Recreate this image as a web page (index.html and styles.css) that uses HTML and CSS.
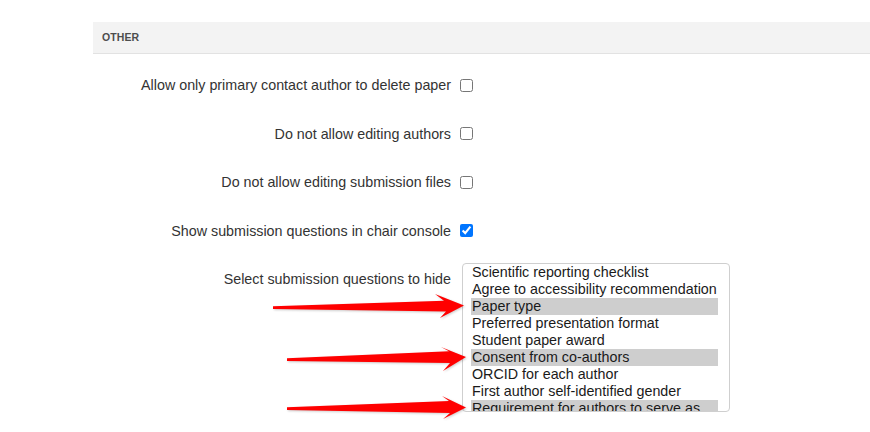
FILE: index.html
```html
<!DOCTYPE html>
<html>
<head>
<meta charset="utf-8">
<link rel="stylesheet" href="styles.css">
</head>
<body>
<div class="page">
  <div class="section-head">OTHER</div>
  <div class="form">
    <div class="row">
      <label class="lbl">Allow only primary contact author to delete paper</label>
      <div class="ctl"><input type="checkbox" class="cb"></div>
    </div>
    <div class="row">
      <label class="lbl">Do not allow editing authors</label>
      <div class="ctl"><input type="checkbox" class="cb"></div>
    </div>
    <div class="row">
      <label class="lbl">Do not allow editing submission files</label>
      <div class="ctl"><input type="checkbox" class="cb"></div>
    </div>
    <div class="row">
      <label class="lbl">Show submission questions in chair console</label>
      <div class="ctl"><input type="checkbox" class="cb" checked></div>
    </div>
    <div class="row row-top">
      <label class="lbl lbl-top">Select submission questions to hide</label>
      <div class="ctl">
        <div class="listbox">
          <div class="opt">Scientific reporting checklist</div>
          <div class="opt">Agree to accessibility recommendation</div>
          <div class="opt sel">Paper type</div>
          <div class="opt">Preferred presentation format</div>
          <div class="opt">Student paper award</div>
          <div class="opt sel">Consent from co-authors</div>
          <div class="opt">ORCID for each author</div>
          <div class="opt">First author self-identified gender</div>
          <div class="opt sel">Requirement for authors to serve as</div>
        </div>
      </div>
    </div>
  </div>
  <svg class="arrows" width="870" height="432" viewBox="0 0 870 432">
    <polygon points="273,306.3 444,300.8 435,294 464,305.6 440,318 446,311.5 273,308.9"/>
    <polygon points="287,358.3 449,351.3 441,347 466,357 443,371 450,363 287,360.9"/>
    <polygon points="287,407.3 449,401 442,396 466,407.6 443,419 450,413 287,409.9"/>
  </svg>
</div>
</body>
</html>
```

FILE: styles.css
```css
html, body {
  margin: 0;
  padding: 0;
  background: #ffffff;
}
body {
  font-family: "Liberation Sans", Arial, sans-serif;
  color: #333333;
  width: 870px;
  height: 432px;
  overflow: hidden;
}
.page {
  position: relative;
  padding-top: 22px;
  padding-left: 93px;
  height: 410px;
}
.section-head {
  height: 31px;
  line-height: 31px;
  background: #f3f3f3;
  border-bottom: 1px solid #e2e2e2;
  padding-left: 9px;
  font-size: 10.5px;
  font-weight: bold;
  letter-spacing: 0.1px;
  color: #4d4d4d;
}
.form {
  padding-top: 6.75px;
}
.row {
  display: grid;
  grid-template-columns: 358px auto;
  column-gap: 9px;
  align-items: center;
  height: 48.5px;
}
.row-top {
  align-items: start;
  padding-top: 8.25px;
  height: auto;
}
.lbl {
  text-align: right;
  font-size: 14.3px;
  line-height: 18px;
  color: #333333;
  white-space: nowrap;
}
.lbl-top {
  padding-top: 6.5px;
}
.ctl {
  display: flex;
  align-items: center;
}
.cb {
  width: 13px;
  height: 13px;
  margin: 0;
}
.listbox {
  margin-left: 2px;
  width: 247px;
  height: 147px;
  overflow: hidden;
  border: 1px solid #cfcfcf;
  border-radius: 4px;
  padding: 0 11px 0 8px;
}
.opt {
  height: 17px;
  line-height: 17px;
  font-size: 14.3px;
  color: #1a1a1a;
  padding-left: 1px;
  white-space: nowrap;
  overflow: hidden;
}
.sel {
  background: #cecece;
}
.arrows {
  position: absolute;
  left: 0;
  top: 0;
  pointer-events: none;
  fill: #ff0000;
  filter: drop-shadow(1px 1px 1px rgba(0,0,0,0.2));
}
```
